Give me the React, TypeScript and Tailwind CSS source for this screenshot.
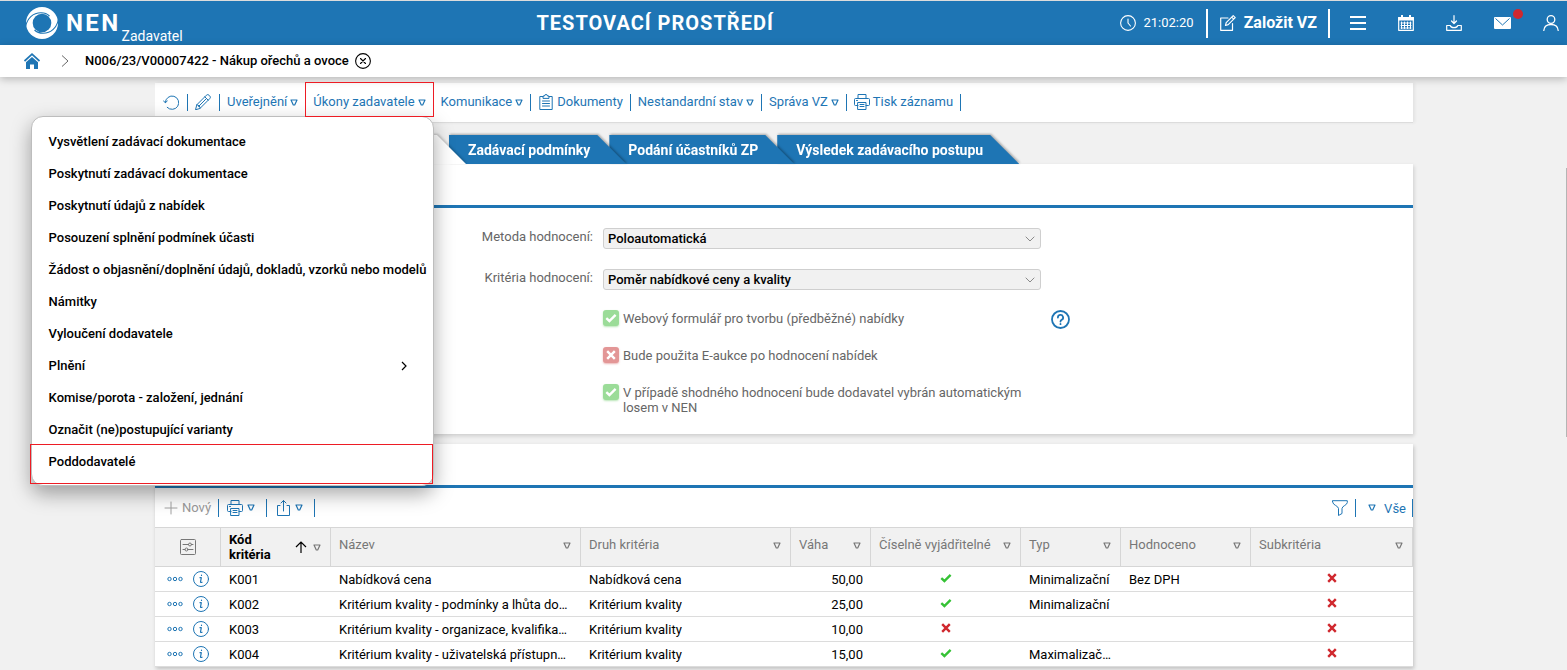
import React from "react";

type IconProps = { className?: string };

function Icon({ className = "size-4", children, box = 16, width = 1 }: { className?: string; children: React.ReactNode; box?: number; width?: number }) {
  return (
    <svg viewBox={`0 0 ${box} ${box}`} className={`shrink-0 ${className}`} fill="none" stroke="currentColor" strokeWidth={width} strokeLinecap="round" strokeLinejoin="round" aria-hidden="true">
      {children}
    </svg>
  );
}

const Triangle = ({ className = "" }: IconProps) => (
  <svg viewBox="0 0 8 7" className={`h-[7px] w-2 shrink-0 ${className}`} fill="none" stroke="currentColor" strokeWidth="1.2" strokeLinejoin="round" aria-hidden="true">
    <path d="M1 1h6L4.7 6H3.3Z" />
  </svg>
);

const Printer = () => (
  <Icon>
    <path d="M4 4.5V.5h8v4M4 11.5H1.5a1 1 0 0 1-1-1v-5a1 1 0 0 1 1-1h13a1 1 0 0 1 1 1v5a1 1 0 0 1-1 1H12M2.5 6.5h1M4 8.500h8v7H4ZM6 10.500h4M6 12.500h4" />
  </Icon>
);

const Check = ({ className = "" }: IconProps) => (
  <svg viewBox="0 0 12 10" className={className} fill="none" stroke="currentColor" strokeWidth="2.4" aria-hidden="true">
    <path d="M1.300 5.200 4.400 8 10.600 1.800" />
  </svg>
);

const Cross = ({ className = "" }: IconProps) => (
  <svg viewBox="0 0 10 10" className={className} fill="none" stroke="currentColor" strokeWidth="2.400" aria-hidden="true">
    <path d="M1.200 1.200l7.600 7.600M8.800 1.200l-7.600 7.600" />
  </svg>
);

function Header() {
  return (
    <header className="flex h-[45px] items-center justify-between border-t border-[#dcdcdc] bg-[#1e75b4] pr-2 pl-[26px] text-white">
      <div className="flex h-full items-center pr-2">
        <svg viewBox="0 0 32 32" className="size-8" aria-hidden="true">
          <circle cx="16" cy="16" r="16" fill="#fff" />
          <circle cx="16" cy="16" r="9.300" fill="#1e75b4" />
          <path d="M-.5 20C1 11.500 7 5.800 15 5.800c4 0 6.500 1.200 8.500 3.200" fill="none" stroke="#1e75b4" strokeWidth="1.100" />
          <path d="M32.500 12C31 20.500 25 26.200 17 26.200c-4 0-6.500-1.200-8.500-3.200" fill="none" stroke="#1e75b4" strokeWidth="1.100" />
        </svg>
        <span className="ml-2 text-2xl font-bold tracking-widest">NEN</span>
        <span className="self-end pb-px pl-px text-sm leading-4">Zadavatel</span>
      </div>
      <h1 className="text-xl font-bold tracking-wider">TESTOVACÍ PROSTŘEDÍ</h1>
      <div className="flex items-center">
        <Icon width={1.100}>
          <circle cx="8" cy="8" r="7.400" />
          <path d="M8 4v4l2.500 3" />
        </Icon>
        <time className="ml-2 text-[13px]">21:02:20</time>
        <button type="button" className="ml-3 flex h-[29px] items-center border-x-2 border-white pr-[11px] pl-3 font-bold">
          <Icon width={1.200}>
            <path d="M8 3H.7v12.300h11.800V8.500M5.500 10.500l.7-2.800 7-7 2 2-7 7ZM11.700 2.200l2 2" />
          </Icon>
          <span className="ml-2 text-base">Založit VZ</span>
        </button>
        <nav className="ml-5 flex items-center gap-8">
          <button type="button" aria-label="Menu">
            <Icon width={2}>
              <path d="M0 2h16M0 8h16M0 14h16" strokeLinecap="butt" />
            </Icon>
          </button>
          <button type="button" aria-label="Kalendář">
            <Icon width={1.200}>
              <path d="M.7 2.500h14.600v12.800H.7Z" />
              <path d="M.7 2.500h14.600v2.500H.7Z" fill="currentColor" />
              <path d="M4 .6v2M12 .6v2" strokeWidth="2" />
              <path d="M3 8h10M3 10.500h10M3 13h10M3.500 7v6.500M6.500 7v6.500M9.500 7v6.500M12.500 7v6.500" strokeWidth="1" />
            </Icon>
          </button>
          <button type="button" aria-label="Stažené soubory">
            <Icon width={1.200}>
              <path d="M8 .7v7.500M5.500 6 8 8.500 10.500 6M.7 10.500h3.500c.6 1.600 2 2.200 3.800 2.200s3.200-.6 3.800-2.200h3.500v4.800H.7Z" />
            </Icon>
          </button>
          <button type="button" aria-label="Zprávy" className="relative">
            <svg viewBox="0 0 17 12" className="h-3 w-[17px]" aria-hidden="true">
              <rect width="17" height="12" rx="1" fill="#fff" />
              <path d="M1.500 1.500 8.500 8l7-6.500" fill="none" stroke="#1e75b4" />
            </svg>
            <span className="absolute -top-2 -right-3 size-[10px] rounded-full bg-[#d0282e]" />
          </button>
          <button type="button" aria-label="Uživatel">
            <Icon width={1.300}>
              <circle cx="8" cy="4.500" r="3.800" />
              <path d="M.8 15.500c.3-4.200 3.200-6 7.200-6s6.900 1.800 7.200 6" />
            </Icon>
          </button>
        </nav>
      </div>
    </header>
  );
}

function Breadcrumb() {
  return (
    <nav className="relative flex h-8 items-center bg-white pl-6 shadow-[0_2px_8px_rgba(0,0,0,0.25)]" aria-label="Drobečková navigace">
      <a href="#" aria-label="Domů" className="text-[#1e75b4]">
        <svg viewBox="0 0 16 16" className="size-4" aria-hidden="true">
          <path d="M.5 8 8 1.200 15.500 8" fill="none" stroke="currentColor" strokeWidth="1.700" />
          <path d="M2 9.200 8 3.900l6 5.300V16h-4v-4.500H6V16H2Z" fill="currentColor" />
        </svg>
      </a>
      <svg viewBox="0 0 8 12" className="ml-[21px] h-3 w-2" fill="none" stroke="#666" strokeWidth="1" aria-hidden="true">
        <path d="M1 .5 7 6l-6 5.500" />
      </svg>
      <span className="ml-4 text-[13px] font-medium text-black">N006/23/V00007422 - Nákup ořechů a ovoce</span>
      <button type="button" aria-label="Zavřít" className="ml-[6px] text-black">
        <Icon width={1.100}>
          <circle cx="8" cy="8" r="7.400" />
          <path d="m5.500 5.500 5 5m0-5-5 5" />
        </Icon>
      </button>
    </nav>
  );
}

const MENU = [
  "Vysvětlení zadávací dokumentace",
  "Poskytnutí zadávací dokumentace",
  "Poskytnutí údajů z nabídek",
  "Posouzení splnění podmínek účasti",
  "Žádost o objasnění/doplnění údajů, dokladů, vzorků nebo modelů",
  "Námitky",
  "Vyloučení dodavatele",
  "Plnění",
  "Komise/porota - založení, jednání",
  "Označit (ne)postupující varianty",
  "Poddodavatelé",
];

function ActionMenu() {
  return (
    <ul role="menu" className="absolute top-[22px] -right-px z-30 w-[403px] rounded-xl border border-[#bdbdbd] bg-white pt-[9px] pb-[7px] shadow-[0_8px_20px_rgba(0,0,0,0.35)]">
      {MENU.map((label) => (
        <li key={label} role="none" className="relative">
          <button type="button" role="menuitem" className="flex h-8 w-full items-center justify-between pr-[25px] pl-[17px] text-[13px] font-medium whitespace-nowrap text-black">
            {label}
            {label === "Plnění" && (
              <svg viewBox="0 0 8 10" className="h-[10px] w-2" fill="none" stroke="currentColor" strokeWidth="1.200" aria-hidden="true">
                <path d="M2 1l4 4-4 4" />
              </svg>
            )}
          </button>
          {label === "Poddodavatelé" && <span className="pointer-events-none absolute -top-[2px] right-0 -bottom-[6px] -left-[2px] z-10 border border-[#ed1c24]" />}
        </li>
      ))}
    </ul>
  );
}

function ToolItem({ label, icon, arrow, menu }: { label?: string; icon?: React.ReactNode; arrow?: boolean; menu?: boolean }) {
  return (
    <div className={`relative flex h-[17px] border-r border-[#1e75b4] pl-[7px] ${label ? "pr-[7px]" : "pr-2"}`}>
      <button type="button" className="flex h-4 items-center gap-[3px] text-[13px] leading-4 whitespace-nowrap">
        {icon}
        {label}
        {arrow && <Triangle />}
      </button>
      {menu && (
        <>
          <ActionMenu />
          <span className="pointer-events-none absolute -top-3 -right-px -bottom-[6px] -left-px z-40 border border-[#ed1c24]" />
        </>
      )}
    </div>
  );
}

function Toolbar() {
  return (
    <div className="flex h-10 items-start border-b border-[#dcdcdc] bg-white pt-[11px] pl-px text-[#1e75b4] shadow-[2px_0_3px_rgba(0,0,0,0.06)]">
      <ToolItem
        icon={
          <Icon>
            <path d="M2.300 8.500a6.700 6.700 0 1 1 1.900 4.900M.5 6.800l1.800 2 2-1.800" />
          </Icon>
        }
      />
      <ToolItem
        icon={
          <Icon>
            <path d="m.6 15.400 1.200-4.600L11.300 1.300a2 2 0 0 1 2.900 0l.5.5a2 2 0 0 1 0 2.900L5.200 14.200ZM9.800 2.800l3.400 3.400M11.500 4.500l-8 8M1.800 10.800c1.800.1 3.200 1.400 3.400 3.400" />
          </Icon>
        }
      />
      <ToolItem label="Uveřejnění" arrow />
      <ToolItem label="Úkony zadavatele" arrow menu />
      <ToolItem label="Komunikace" arrow />
      <ToolItem
        label="Dokumenty"
        icon={
          <Icon>
            <path d="M5 2.500H1.800v13h12.400v-13H11M5 4V2h1.500a1.500 1.500 0 0 1 3 0H11v2ZM4.500 7h7M4.500 9.500h7M4.500 12h7" />
          </Icon>
        }
      />
      <ToolItem label="Nestandardní stav" arrow />
      <ToolItem label="Správa VZ" arrow />
      <ToolItem label="Tisk záznamu" icon={<Printer />} />
    </div>
  );
}

function Tab({ label, order }: { label: string; order: string }) {
  return (
    <div className={`relative -ml-[17px] drop-shadow-[1px_-1px_1px_rgba(0,0,0,0.3)] ${order}`}>
      <button
        type="button"
        role="tab"
        className="h-[29px] bg-[#1e75b4] pt-px pr-9 pl-[19px] text-sm font-bold whitespace-nowrap text-white [clip-path:polygon(0_0,calc(100%-29px)_0,100%_100%,0_100%)]"
      >
        {label}
      </button>
    </div>
  );
}

function Tabs() {
  return (
    <div role="tablist" className="mt-3 flex">
      <div className="relative z-[4] w-[311px] drop-shadow-[1px_-1px_1px_rgba(0,0,0,0.2)]">
        <div className="h-[29px] bg-white [clip-path:polygon(0_0,calc(100%-29px)_0,100%_100%,0_100%)]" />
      </div>
      <Tab label="Zadávací podmínky" order="z-[3]" />
      <Tab label="Podání účastníků ZP" order="z-[2]" />
      <Tab label="Výsledek zadávacího postupu" order="z-[1]" />
    </div>
  );
}

function SelectRow({ id, label, value, children }: { id: string; label: string; value: string; children?: React.ReactNode }) {
  return (
    <>
      <label htmlFor={id} className="text-right text-[13px] leading-[17px]">
        {label}
      </label>
      <div className="relative">
        <select id={id} defaultValue={value} className="block h-[21px] w-full appearance-none rounded-[3px] border border-[#cfcfcf] bg-[#f1f1f1] px-1 text-[13px] leading-[19px] font-medium text-black">
          <option>{value}</option>
        </select>
        <svg viewBox="0 0 10 6" className="pointer-events-none absolute top-2 right-[6px] h-[6px] w-[10px]" fill="none" stroke="#8a8a8a" aria-hidden="true">
          <path d="M.7.700 5 5 9.300.700" />
        </svg>
      </div>
      <div>{children}</div>
    </>
  );
}

function CheckRow({ label, on, help }: { label: string; on: boolean; help?: boolean }) {
  return (
    <>
      <label className="col-start-2 flex min-h-[17px] items-start gap-1 text-[13px] leading-[15px]">
        <span className="relative block size-4 shrink-0">
          <input
            type="checkbox"
            defaultChecked={on}
            className="block size-4 appearance-none rounded-[3px] bg-[#e39696] shadow-[0_1px_2px_rgba(227,150,150,0.7)] checked:bg-[#9bdc98] checked:shadow-[0_1px_2px_rgba(155,220,152,0.7)]"
          />
          {on ? (
            <Check className="pointer-events-none absolute top-[3px] left-[2px] h-[10px] w-3 text-white" />
          ) : (
            <Cross className="pointer-events-none absolute top-[3px] left-[3px] size-[10px] text-white" />
          )}
        </span>
        <span className="pt-px">{label}</span>
      </label>
      <div className="h-[17px]">
        {help && (
          <button type="button" aria-label="Nápověda" className="block text-[#1e75b4]">
            <Icon className="size-[19px]" box={19} width={1.800}>
              <circle cx="9.500" cy="9.500" r="8.500" />
              <path d="M6.900 7.500a2.600 2.600 0 1 1 3.800 2.300c-.8.400-1.200.9-1.200 1.700M9.500 14v.2" />
            </Icon>
          </button>
        )}
      </div>
    </>
  );
}

function EvaluationForm() {
  return (
    <section className="bg-white shadow-[1px_2px_4px_rgba(0,0,0,0.15)]">
      <div className="h-11 border-b-[3px] border-[#1e75b4]" />
      <div className="grid grid-cols-[438fr_438fr_362fr] gap-x-[10px] gap-y-5 pt-5 pb-[19px] text-[#666]">
        <SelectRow id="metoda" label="Metoda hodnocení:" value="Poloautomatická" />
        <SelectRow id="kriteria" label="Kritéria hodnocení:" value="Poměr nabídkové ceny a kvality" />
        <CheckRow label="Webový formulář pro tvorbu (předběžné) nabídky" on help />
        <CheckRow label="Bude použita E-aukce po hodnocení nabídek" on={false} />
        <CheckRow label="V případě shodného hodnocení bude dodavatel vybrán automatickým losem v NEN" on />
      </div>
    </section>
  );
}

type Row = { code: string; name: string; kind: string; weight: string; numeric: boolean; type: string; rated: string };

const ROWS: Row[] = [
  { code: "K001", name: "Nabídková cena", kind: "Nabídková cena", weight: "50,00", numeric: true, type: "Minimalizační", rated: "Bez DPH" },
  { code: "K002", name: "Kritérium kvality - podmínky a lhůta do…", kind: "Kritérium kvality", weight: "25,00", numeric: true, type: "Minimalizační", rated: "" },
  { code: "K003", name: "Kritérium kvality - organizace, kvalifika…", kind: "Kritérium kvality", weight: "10,00", numeric: false, type: "", rated: "" },
  { code: "K004", name: "Kritérium kvality - uživatelská přístupn…", kind: "Kritérium kvality", weight: "15,00", numeric: true, type: "Maximalizač…", rated: "" },
];

const COLUMNS = [
  { label: "Název", width: "w-[250px]" },
  { label: "Druh kritéria", width: "w-[210px]" },
  { label: "Váha", width: "w-[80px]" },
  { label: "Číselně vyjádřitelné", width: "w-[150px]" },
  { label: "Typ", width: "w-[100px]" },
  { label: "Hodnoceno", width: "w-[130px]" },
  { label: "Subkritéria", width: "" },
];

function Mark({ ok }: { ok: boolean }) {
  return ok ? <Check className="mx-auto mb-[2px] h-[10px] w-3 text-[#35c235]" /> : <Cross className="mx-auto mb-[2px] size-[10px] text-[#d0282e]" />;
}

function CriteriaTable() {
  return (
    <table className="w-full table-fixed border-separate border-spacing-0 text-[13px] text-black [&_td]:border-b [&_td]:border-[#dcdcdc] [&_th]:border-y [&_th]:border-r [&_th]:border-[#d6d6d6]">
      <thead>
        <tr className="h-10 bg-[#f1f1f1] text-[#777]">
          <th className="w-[66px] p-0">
            <button type="button" aria-label="Nastavení sloupců" className="mx-auto block align-middle">
              <Icon>
                <rect x=".5" y=".5" width="15" height="15" rx="1" />
                <path d="M3 5.500h5.500M11.500 5.500H13M3 10.500h2M8 10.500h5" />
                <circle cx="10" cy="5.500" r="1.500" />
                <circle cx="6.500" cy="10.500" r="1.500" />
              </Icon>
            </button>
          </th>
          <th className="w-[110px] px-2 py-0 text-left font-bold text-black">
            <div className="flex items-center leading-[15px]">
              <span className="flex-1">
                Kód
                <br />
                kritéria
              </span>
              <svg viewBox="0 0 12 12" className="h-3 w-3" fill="none" stroke="currentColor" strokeWidth="1.200" aria-hidden="true">
                <path d="M6 12V1M1 6l5-5 5 5" />
              </svg>
              <Triangle className="mr-px ml-[6px] text-[#777]" />
            </div>
          </th>
          {COLUMNS.map((c) => (
            <th key={c.label} className={`${c.width} px-2 pt-0 pb-1 text-left font-normal`}>
              <div className="flex items-center justify-between whitespace-nowrap">
                {c.label}
                <Triangle className="mr-px" />
              </div>
            </th>
          ))}
        </tr>
      </thead>
      <tbody>
        {ROWS.map((r) => (
          <tr key={r.code} className="h-[25px]">
            <td className="p-0">
              <div className="flex items-center gap-[10px] pl-3 text-[#1e75b4]">
                <button type="button" aria-label={`Akce ${r.code}`}>
                  <svg viewBox="0 0 16 6" className="h-[6px] w-4" fill="none" stroke="currentColor" strokeWidth="1" aria-hidden="true">
                    <circle cx="2.500" cy="3" r="1.700" />
                    <circle cx="8" cy="3" r="1.700" />
                    <circle cx="13.500" cy="3" r="1.700" />
                  </svg>
                </button>
                <button type="button" aria-label={`Detail ${r.code}`}>
                  <Icon>
                    <circle cx="8" cy="8" r="7.500" />
                    <path d="M7 6.700h1.300L7.500 11c0 .6.700.7 1.500.2M8.500 4.200v.2" strokeWidth="1.200" />
                  </Icon>
                </button>
              </div>
            </td>
            <td className="px-2 pt-[2px] pb-0">{r.code}</td>
            <td className="pt-[2px] pb-0 pl-2 whitespace-nowrap">{r.name}</td>
            <td className="px-2 pt-[2px] pb-0">{r.kind}</td>
            <td className="px-2 pt-[2px] pb-0 text-right">{r.weight}</td>
            <td className="p-0">
              <Mark ok={r.numeric} />
            </td>
            <td className="pt-[2px] pb-0 pl-2 whitespace-nowrap">{r.type}</td>
            <td className="px-2 pt-[2px] pb-0">{r.rated}</td>
            <td className="p-0">
              <Mark ok={false} />
            </td>
          </tr>
        ))}
      </tbody>
    </table>
  );
}

function Criteria() {
  return (
    <section className="mt-[10px] bg-white shadow-[1px_2px_4px_rgba(0,0,0,0.2)]">
      <div className="h-11 border-b-[3px] border-[#1e75b4]" />
      <div className="flex h-[39px] items-center justify-between text-[13px] text-[#1e75b4]">
        <div className="flex">
          <button type="button" className="flex h-[18px] items-center gap-1 border-r border-[#1e75b4] pr-[7px] pl-[9px]">
            <Icon className="size-[14px] text-[#a0a0a0]" box={14}>
              <path d="M7 1v12M1 7h12" />
            </Icon>
            <span className="text-[#999]">Nový</span>
          </button>
          <button type="button" aria-label="Tisk" className="flex h-[18px] items-center gap-1 border-r border-[#1e75b4] pr-[11px] pl-2">
            <Printer />
            <Triangle />
          </button>
          <button type="button" aria-label="Export" className="flex h-[18px] items-center gap-1 border-r border-[#1e75b4] pr-[11px] pl-2">
            <Icon>
              <path d="M5 5.500H2.500v10h12v-10H12M8.500 11V.7M6 3 8.500.5 11 3" />
            </Icon>
            <Triangle />
          </button>
        </div>
        <div className="flex">
          <button type="button" aria-label="Filtr" className="flex h-[18px] items-center border-r border-[#1e75b4] pr-[7px]">
            <Icon>
              <path d="M.7.700h14.600v1.800C15.300 5 10 6 10 8.500v5l-3.500 2v-7C6.500 6 .7 5 .7 2.500Z" />
            </Icon>
          </button>
          <button type="button" className="flex h-[18px] items-center gap-2 border-r border-[#1e75b4] pr-[6px] pl-3">
            <Triangle />
            <span className="pt-[2px]">Vše</span>
          </button>
        </div>
      </div>
      <CriteriaTable />
    </section>
  );
}

export default function App() {
  return (
    <div className="relative min-h-screen bg-[#f1f1f1] font-['Roboto',sans-serif]">
      <Header />
      <Breadcrumb />
      <main className="pt-[6px] pr-[154px] pl-[155px]">
        <Toolbar />
        <Tabs />
        <EvaluationForm />
        <Criteria />
      </main>
      <div className="absolute top-[168px] right-0 h-[269px] w-px bg-[#b5b5b5]" />
    </div>
  );
}
